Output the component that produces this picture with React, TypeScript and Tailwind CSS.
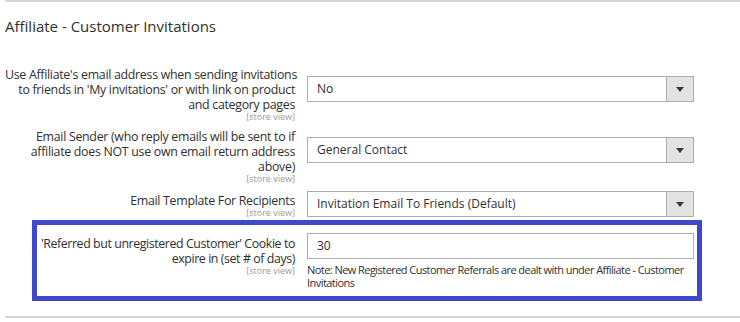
import { ReactNode } from 'react';

const font = { fontFamily: '"Open Sans", "Noto Sans", sans-serif' };

function Select({ value }: { value: string }) {
  return (
    <div className="flex h-[26px] w-[387px] border border-[#adadad] bg-white">
      <div className="flex flex-1 items-center pl-[9px] text-[12px] text-[#303030]">{value}</div>
      <div className="flex w-[27px] items-center justify-center border-l border-[#adadad] bg-[#e3e3e3]">
        <svg width="8" height="5" viewBox="0 0 8 5">
          <path d="M0 0h8L4 5z" fill="#41362f" />
        </svg>
      </div>
    </div>
  );
}

function Label({ lines, tight }: { lines: string[]; tight?: boolean }) {
  return (
    <div className="relative w-[290px] shrink-0 text-right">
      {lines.map(l => (
        <div
          key={l}
          className={`whitespace-nowrap text-[12.4px] font-normal leading-[15px] text-[#303030] ${
            tight ? 'tracking-[-0.42px]' : 'tracking-[-0.3px]'
          }`}
        >
          {l}
        </div>
      ))}
      <div className="text-[9px] leading-[10px] text-[#999]">[store view]</div>
    </div>
  );
}

function Row({ label, children, className }: { label: ReactNode; children: ReactNode; className?: string }) {
  return (
    <div className={`flex gap-[12px] ${className ?? ''}`}>
      {label}
      {children}
    </div>
  );
}

export default function App() {
  return (
    <div className="h-[322px] w-[740px] overflow-hidden bg-white pl-[5px]" style={font}>
      <div className="border-t-2 border-[#d6d6d6]" />
      <h2 className="mt-[14px] text-[15px] font-normal leading-[20px] text-[#303030]">
        Affiliate - Customer Invitations
      </h2>

      <Row
        className="mt-[31px]"
        label={
          <Label
            lines={[
              "Use Affiliate's email address when sending invitations",
              "to friends in 'My invitations' or with link on product",
              'and category pages',
            ]}
          />
        }
      >
        <div className="pt-[9px]">
          <Select value="No" />
        </div>
      </Row>

      <Row
        className="mt-[7px]"
        label={
          <Label
            lines={[
              'Email Sender (who reply emails will be sent to if',
              'affiliate does NOT use own email return address',
              'above)',
            ]}
          />
        }
      >
        <div className="pt-[8px]">
          <Select value="General Contact" />
        </div>
      </Row>

      <Row className="mt-[9px]" label={<Label lines={['Email Template For Recipients']} />}>
        <div className="-mt-[2px]">
          <Select value="Invitation Email To Friends (Default)" />
        </div>
      </Row>

      {/* highlighted field */}
      <div className="ml-[27px] mt-[2px] h-[81px] w-[670px] border-[5px] border-[#3f48cc]">
        <Row
          className="-ml-[32px] pt-[11px]"
          label={
            <Label
              tight
              lines={["'Referred but unregistered Customer' Cookie to", 'expire in (set # of days)']}
            />
          }
        >
          <div className="-mt-[3px]">
            <div className="flex h-[26px] w-[387px] items-center border border-[#adadad] bg-white pl-[9px] text-[12px] text-[#303030]">
              30
            </div>
            <div className="mt-[4px] w-[387px] text-[11px] leading-[13px] tracking-[-0.55px] text-[#303030]">
              Note: New Registered Customer Referrals are dealt with under Affiliate - Customer Invitations
            </div>
          </div>
        </Row>
      </div>

      <div className="mt-[15px] border-t-2 border-[#d6d6d6]" />
    </div>
  );
}
